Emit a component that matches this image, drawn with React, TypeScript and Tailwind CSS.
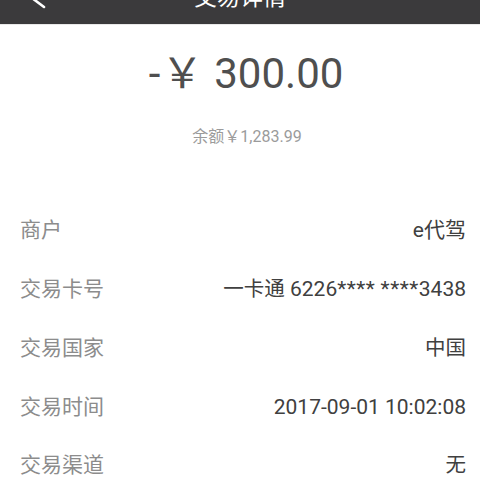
import React from "react";

const font = { fontFamily: "Roboto, 'Noto Sans CJK SC', sans-serif" };

const rows: { label: string; value: React.ReactNode }[] = [
  { label: "商户", value: <>e代驾</> },
  {
    label: "交易卡号",
    value: (
      <>
        <span className="text-[20.5px]">一卡通</span> 6226<span className="tracking-[0.5px]">****</span> <span className="tracking-[0.5px]">****</span>3438
      </>
    ),
  },
  { label: "交易国家", value: <span className="text-[20.5px]">中国</span> },
  { label: "交易时间", value: <>2017-09-01 10:02:08</> },
  { label: "交易渠道", value: <span className="text-[20.5px]">无</span> },
];

export default function App() {
  return (
    <div className="w-[480px] h-[480px] overflow-hidden bg-white" style={font}>
      <div className="relative h-[25px] bg-[#3b3a3c] border-b border-[#e9e9e9] flex justify-center items-end overflow-hidden">
        <svg className="absolute left-0 top-0" width="60" height="24" viewBox="0 0 60 24" fill="none">
          <polyline points="44,-11 32,-2 44,7" stroke="#ffffff" strokeWidth="2.6" strokeLinecap="round" strokeLinejoin="round" />
        </svg>
        <span className="text-white text-[23px] leading-[30px] mb-[11px] whitespace-nowrap">交易详情</span>
      </div>
      <div className="flex flex-col items-center">
        <div className="mt-[27px] flex items-center text-[#4f4f4f] text-[42px] leading-[44px] whitespace-nowrap pl-[12px]">
          <span>-</span>
          <span className="ml-[1px]">￥</span>
          <span className="ml-[11px]">300.00</span>
        </div>
        <div className="mt-[31px] pl-[14px] text-[#9b9b9b] text-[16px] leading-[20px] whitespace-nowrap">余额￥1,283.99</div>
      </div>
      <div className="mt-[54px] flex flex-col">
        {rows.map((r) => (
          <div key={r.label} className="h-[58.75px] flex items-center justify-between pl-[20px] pr-[14px]">
            <span className="text-[#8c8c8c] text-[21px] leading-[24px]">{r.label}</span>
            <span className="text-[#404040] text-[21px] leading-[24px] whitespace-nowrap">{r.value}</span>
          </div>
        ))}
      </div>
    </div>
  );
}
